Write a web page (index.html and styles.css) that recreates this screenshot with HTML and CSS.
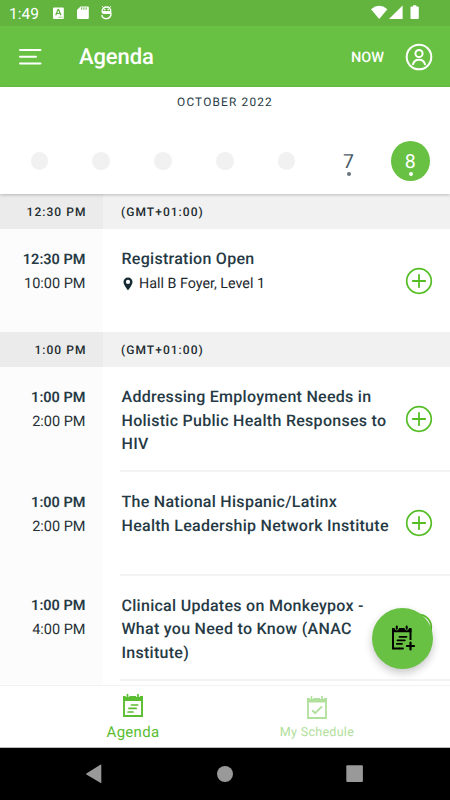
FILE: index.html
```html
<!DOCTYPE html>
<html lang="en">
<head>
  <meta charset="UTF-8" />
  <meta name="viewport" content="width=device-width, initial-scale=1.0"/>
  <title>Agenda</title>
  <link rel="stylesheet" href="styles.css">
</head>
<body>
  <!-- Shared icons -->
  <svg class="defs" width="0" height="0">
    <symbol id="plus" viewBox="0 0 28 28">
      <circle cx="14" cy="14" r="12.3" fill="none" stroke="#55bd24" stroke-width="1.7"/>
      <path d="M14 7.8v12.4M7.8 14h12.4" stroke="#55bd24" stroke-width="1.8" stroke-linecap="round"/>
    </symbol>
  </svg>

  <div class="status-bar">
    <span class="clock">1:49</span>
    <svg class="status-left" width="62" height="16" viewBox="0 0 62 16">
      <rect x="1" y="2.4" width="10.8" height="11.6" rx="1" fill="#fff"/>
      <path d="M3.7 10.3 6 4.7h.7l2.3 5.6M4.6 8.5h3.5" fill="none" stroke="#62b43f" stroke-width="1.2"/>
      <path d="M6.5 12.2h4" stroke="#62b43f" stroke-width=".8" stroke-dasharray="1.2 .4"/>
      <path d="M28.5 1.4h7.3a1 1 0 0 1 1 1v10.7a1 1 0 0 1-1 1H26a1 1 0 0 1-1-1V5z" fill="#fff"/>
      <path d="M29.7 2.3v2.4M31.9 2.3v2.4M34.1 2.3v2.4" stroke="#62b43f" stroke-width="1"/>
      <path d="M50.2 1.2l1.3 1.6M58.8 1.2l-1.3 1.6" stroke="#fff" stroke-width="1"/>
      <path d="M59 6.8H50.2C49.7.4 59.3.4 58.8 6.8M50.2 6.5C50.2 8 51 8.3 52.3 8.3H59C59.6 15.2 49.4 15.2 50 9.8" fill="none" stroke="#fff" stroke-width="1.4"/>
      <circle cx="52.8" cy="4.6" r=".8" fill="#fff"/>
      <circle cx="56.2" cy="4.6" r=".8" fill="#fff"/>
    </svg>
    <svg class="status-right" width="52" height="16" viewBox="0 0 52 16" fill="#fff">
      <path d="M1 4.2Q9.2-2.5 17.4 4.2L9.2 14z"/>
      <path d="M32.6.5V14H19z"/>
      <path d="M40.5 2.2q0-.8.8-.8h1.7V.3h3.3v1.1H48q.8 0 .8.8v10.9q0 .9-.8.9h-6.7q-.8 0-.8-.9z"/>
    </svg>
  </div>

  <header class="app-bar">
    <svg class="menu" width="24" height="20" viewBox="0 0 24 20">
      <path d="M1 3h20.5M1 9.8h16M1 16.4h20.5" stroke="#fff" stroke-width="2" stroke-linecap="round"/>
    </svg>
    <h1>Agenda</h1>
    <span class="now">NOW</span>
    <svg class="profile" width="28" height="28" viewBox="0 0 28 28" fill="none" stroke="#fff" stroke-width="2">
      <circle cx="14" cy="14" r="12.3"/>
      <circle cx="14" cy="10.5" r="3.6"/>
      <path d="M8 21.3c1.5-6.2 10.5-6.2 12 0" stroke-linecap="round"/>
    </svg>
  </header>

  <!-- Day picker -->
  <section class="dates">
    <div class="month">OCTOBER 2022</div>
    <div class="days">
      <span class="day"><i class="blank"></i></span>
      <span class="day"><i class="blank"></i></span>
      <span class="day"><i class="blank"></i></span>
      <span class="day"><i class="blank"></i></span>
      <span class="day"><i class="blank"></i></span>
      <span class="day">7<i class="dot"></i></span>
      <span class="day active">8<i class="dot"></i></span>
    </div>
  </section>

  <!-- Sessions -->
  <main class="agenda">
    <div class="slot">
      <span class="slot-time">12:30 PM</span>
      <span class="zone">(GMT+01:00)</span>
    </div>
    <div class="session short">
      <div class="times"><b>12:30 PM</b><span>10:00 PM</span></div>
      <div class="info">
        <div class="text">
          <h2>Registration Open</h2>
          <p>
            <svg width="10" height="14" viewBox="0 0 10 14"><path d="M5 .5a4.5 4.5 0 0 1 4.5 4.5C9.5 8 5 13.3 5 13.3S.5 8 .5 5A4.5 4.5 0 0 1 5 .5zm0 2.3a2.1 2.1 0 1 0 0 4.2 2.1 2.1 0 0 0 0-4.2z" fill="#182a34" fill-rule="evenodd"/></svg>
            Hall B Foyer, Level 1
          </p>
        </div>
        <svg class="add" width="28" height="28"><use href="#plus"/></svg>
      </div>
    </div>

    <div class="slot">
      <span class="slot-time">1:00 PM</span>
      <span class="zone">(GMT+01:00)</span>
    </div>
    <div class="session tall">
      <div class="times"><b>1:00 PM</b><span>2:00 PM</span></div>
      <div class="info line">
        <div class="text"><h2>Addressing Employment Needs in<br>Holistic Public Health Responses to<br>HIV</h2></div>
        <svg class="add" width="28" height="28"><use href="#plus"/></svg>
      </div>
    </div>
    <div class="session">
      <div class="times"><b>1:00 PM</b><span>2:00 PM</span></div>
      <div class="info line">
        <div class="text"><h2>The National Hispanic/Latinx<br>Health Leadership Network Institute</h2></div>
        <svg class="add" width="28" height="28"><use href="#plus"/></svg>
      </div>
    </div>
    <div class="session tall">
      <div class="times"><b>1:00 PM</b><span>4:00 PM</span></div>
      <div class="info line">
        <div class="text"><h2>Clinical Updates on Monkeypox -<br>What you Need to Know (ANAC<br>Institute)</h2></div>
        <svg class="add" width="28" height="28"><use href="#plus"/></svg>
      </div>
    </div>
    <div class="filler"></div>

    <div class="fab">
      <svg width="26" height="26" viewBox="0 0 26 26" fill="none" stroke="#000">
        <path d="M11 23.5H4V4M21.5 4v11" stroke-width="2"/>
        <path d="M3 3h2.5c.8 3.2 4 3.2 4.6 0h5.3c.8 3.2 4 3.2 4.6 0h2.5v4.3H3z" fill="#000" stroke="none"/>
        <path d="M7.8 1.5v2.3M17.7 1.5v2.3" stroke-width="2" stroke-linecap="round"/>
        <path d="M10.5 11.8h7M8.5 15.3h7.3M7.8 18.8h5.2M11 23.5h3" stroke-width="1.8" stroke-linecap="round"/>
        <path d="M21.5 17.5v7M18 21h7" stroke-width="2.2" stroke-linecap="round"/>
      </svg>
    </div>
  </main>

  <footer class="tabs">
    <div class="tab selected">
      <svg width="22" height="25" viewBox="0 0 22 25">
        <path d="M2 5v18h18V5z" fill="none" stroke="currentColor" stroke-width="1.9"/>
        <path d="M1 3h2.5c.8 3 3.500 3 4 0h6.500c.8 3 3.500 3 4 0H21v5H1z" fill="currentColor"/>
        <path d="M5.500 1.500v2.300M16 1.500v2.300M9.500 12h6.200M7 15.400h7.200M6 19h5" stroke="currentColor" stroke-width="1.7" stroke-linecap="round"/>
      </svg>
      <span>Agenda</span>
    </div>
    <div class="tab">
      <svg width="22" height="25" viewBox="0 0 22 25">
        <path d="M2 5v18h18V5z" fill="none" stroke="currentColor" stroke-width="1.8"/>
        <path d="M1 3h2.5c.8 3 3.500 3 4 0h6.500c.8 3 3.500 3 4 0H21v4.500H1z" fill="currentColor"/>
        <path d="M5.500 1.500v2.300M16 1.500v2.300" stroke="currentColor" stroke-width="1.7" stroke-linecap="round"/>
        <path d="M6.200 15.200l3 3 6.800-6.800" fill="none" stroke="currentColor" stroke-width="2"/>
      </svg>
      <span>My Schedule</span>
    </div>
  </footer>

  <div class="system-nav">
    <svg width="450" height="52" viewBox="0 0 450 52" fill="#999">
      <path d="M101.3 17.2v17.2q0 1-1 .4L86.4 26.6q-.8-.6 0-1.2l13.9-8.6q1-.6 1 .4z"/>
      <circle cx="225" cy="26" r="8"/>
      <rect x="346.3" y="17.3" width="16.6" height="16.8" rx="1"/>
    </svg>
  </div>
</body>
</html>
```

FILE: styles.css
```css
* { box-sizing: border-box; }
body { font-family: Roboto, sans-serif; text-rendering: geometricPrecision; margin: 0; width: 450px; height: 800px; overflow: hidden; background: #fff; color: #263a45; display: flex; flex-direction: column; }
h1, h2, p { margin: 0; }
svg { display: block; flex: none; }
.defs { position: absolute; }

/* Status bar */
.status-bar { height: 26px; flex: none; background: #62b43f; color: #fff; display: flex; align-items: center; padding: 0 28px 0 9px; }
.clock { font-size: 15.5px; width: 43px; padding-top: 1px; }
.status-right { margin-left: auto; }

/* App bar */
.app-bar { height: 61px; flex: none; background: #68c143; color: #fff; display: flex; align-items: center; padding: 0 17px 0 19px; }
.app-bar h1 { font-size: 22px; font-weight: 500; margin-left: 36px; padding-top: 2px; letter-spacing: -.1px; }
.now { font-size: 14.5px; font-weight: 500; margin-left: auto; margin-right: 21px; padding-top: 1px; }

/* Day picker */
.dates { height: 107px; flex: none; background: #fff; box-shadow: 0 1px 3px rgba(0,0,0,.22); z-index: 1; }
.month { font-size: 11.8px; line-height: 14px; letter-spacing: 1.2px; text-align: center; padding-top: 8px; }
.days { display: flex; padding: 32px 9px 0; }
.day { position: relative; width: 39px; height: 40px; margin: 0 11.45px; display: flex; align-items: center; justify-content: center; font-size: 19.5px; color: #4d5b64; border-radius: 50%; }
.days .day:first-child { margin-left: 11px; }
.blank { width: 17.5px; height: 17.5px; border-radius: 50%; background: #f1f1f1; }
.dot { position: absolute; left: 18px; top: 31px; width: 4px; height: 4px; border-radius: 50%; background: #68747b; }
.active { background: #68c143; color: #fff; }
.active .dot { background: #fff; }

/* Session list */
.agenda { position: relative; height: 491px; flex: none; display: flex; flex-direction: column; }
.slot { height: 35px; flex: none; display: flex; background: #f1f1f1; font-size: 12px; font-weight: 500; line-height: 36px; letter-spacing: 1.05px; color: #222b30; }
.slot-time { width: 103px; background: #ebebeb; text-align: right; padding-right: 16.5px; }
.zone { padding-left: 18px; }
.session { height: 103.5px; flex: none; display: flex; }
.short { height: 103px; }
.tall { height: 105px; }
.times { width: 103px; background: #fcfcfc; padding: 18.5px 17.5px 0 0; text-align: right; font-size: 14.5px; line-height: 24px; display: flex; flex-direction: column; }
.times b { font-weight: 600; }
.times span { color: #263036; }
.info { flex: 1; margin-left: 17px; padding-right: 17px; display: flex; align-items: center; }
.info.line { border-bottom: 2px solid #f3f3f3; }
.text { align-self: flex-start; padding: 18px 0 0 1.5px; }
.text h2 { font-size: 16px; line-height: 23.5px; font-weight: 500; letter-spacing: .28px; white-space: nowrap; }
.text p { display: flex; align-items: center; gap: 6px; font-size: 14.3px; line-height: 24px; margin-top: 1px; padding-left: 1.5px; color: #1c272d; }
.add { margin-left: auto; }
.filler { flex: 1; width: 103px; background: #fcfcfc; }

/* Floating button */
.fab { position: absolute; right: 17.5px; bottom: 16.5px; width: 61px; height: 61px; border-radius: 50%; background: #68c143; box-shadow: 0 4px 8px rgba(0,0,0,.22); display: flex; align-items: center; justify-content: center; }

/* Bottom tabs */
.tabs { height: 63px; flex: none; background: #fff; border-top: 1px solid #f2f2f2; border-bottom: 1px solid #bbb; display: flex; padding: 0 41px; z-index: 1; }
.tab { width: 184px; display: flex; flex-direction: column; align-items: center; color: #b1e09c; font-size: 12.5px; padding-top: 9px; }
.tab span { line-height: 16px; margin-top: 5px; letter-spacing: .3px; }
.selected { color: #5bbd32; font-size: 15px; padding-top: 7px; }
.selected span { margin-top: 6px; }

.system-nav { height: 52px; flex: none; background: #000; }
```
